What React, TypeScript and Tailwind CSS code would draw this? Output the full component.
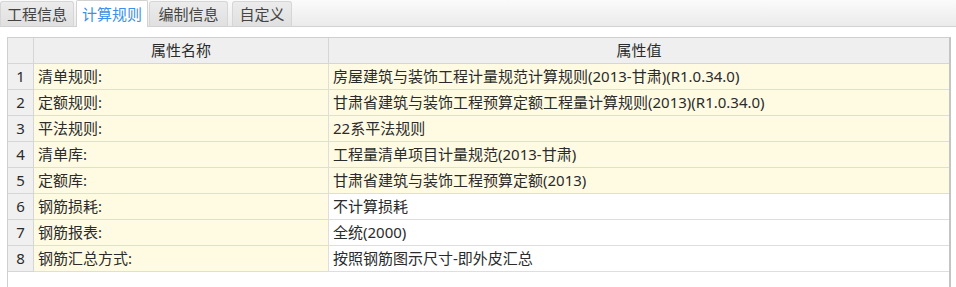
import React from 'react';

const tabs = [
  { label: '工程信息', w: 'w-[74px]' },
  { label: '计算规则', w: 'w-[72px]' },
  { label: '编制信息', w: 'w-[79px]' },
  { label: '自定义', w: 'w-[60px]' },
];

const rows: { name: string; value: string; hl: boolean }[] = [
  { name: '清单规则:', value: '房屋建筑与装饰工程计量规范计算规则(2013-甘肃)(R1.0.34.0)', hl: true },
  { name: '定额规则:', value: '甘肃省建筑与装饰工程预算定额工程量计算规则(2013)(R1.0.34.0)', hl: true },
  { name: '平法规则:', value: '22系平法规则', hl: true },
  { name: '清单库:', value: '工程量清单项目计量规范(2013-甘肃)', hl: true },
  { name: '定额库:', value: '甘肃省建筑与装饰工程预算定额(2013)', hl: true },
  { name: '钢筋损耗:', value: '不计算损耗', hl: false },
  { name: '钢筋报表:', value: '全统(2000)', hl: false },
  { name: '钢筋汇总方式:', value: '按照钢筋图示尺寸-即外皮汇总', hl: false },
];

const font = { fontFamily: '"Noto Sans", "Noto Sans CJK SC", sans-serif' };

export default function App() {
  return (
    <div className="w-[956px] h-[287px] bg-white overflow-hidden text-[#2b2b2b]" style={font}>
      {/* tab strip */}
      <div className="h-[27px] flex items-end bg-gradient-to-b from-[#fbfbfb] to-[#ebebeb] border-b border-[#d2d2d2]">
        {tabs.map((t, i) =>
          i === 1 ? (
            <div
              key={t.label}
              className={`${t.w} ml-[2px] h-[27px] -mb-px flex items-center justify-center bg-white border-x border-t border-[#d2d2d2] text-[15px] text-[#3d8fe8] rounded-t-[2px]`}
            >
              {t.label}
            </div>
          ) : (
            <div
              key={t.label}
              className={`${t.w} ${i === 0 ? '' : i === 2 ? 'ml-[1px]' : 'ml-[4px]'} h-[25px] flex items-center justify-center bg-gradient-to-b from-[#ececec] to-[#e0e0e0] border-x border-t border-[#d6d6d6] text-[15px] text-[#444] rounded-t-[3px]`}
            >
              {t.label}
            </div>
          )
        )}
      </div>

      {/* property grid */}
      <div className="mt-[10px] ml-[7px] w-[944px] h-[260px] border border-[#cfcfcf] border-r-[#c4c4c4] border-r-2 text-[15px]">
        <div className="grid grid-cols-[26px_295px_1fr]">
          <div className="h-[26px] bg-[#efefef] border-r border-b border-[#d6d6d6]" />
          <div className="h-[26px] bg-[#efefef] border-r border-b border-[#d6d6d6] flex items-center justify-center">
            属性名称
          </div>
          <div className="h-[26px] bg-[#efefef] border-b border-[#d6d6d6] flex items-center justify-center">
            属性值
          </div>
          {rows.map((r, i) => (
            <React.Fragment key={r.name}>
              <div className="h-[26px] bg-[#f0f0f0] border-r border-b border-[#d6d6d6] flex items-center justify-center">
                {i + 1}
              </div>
              <div className="h-[26px] bg-[#fffbe3] border-r border-b border-[#dedede] flex items-center pl-[4px]">
                {r.name}
              </div>
              <div
                className={`h-[26px] border-b border-[#dedede] flex items-center pl-[4px] whitespace-nowrap ${
                  r.hl ? 'bg-[#fffbe3]' : 'bg-white'
                }`}
              >
                {r.value}
              </div>
            </React.Fragment>
          ))}
        </div>
      </div>
    </div>
  );
}
